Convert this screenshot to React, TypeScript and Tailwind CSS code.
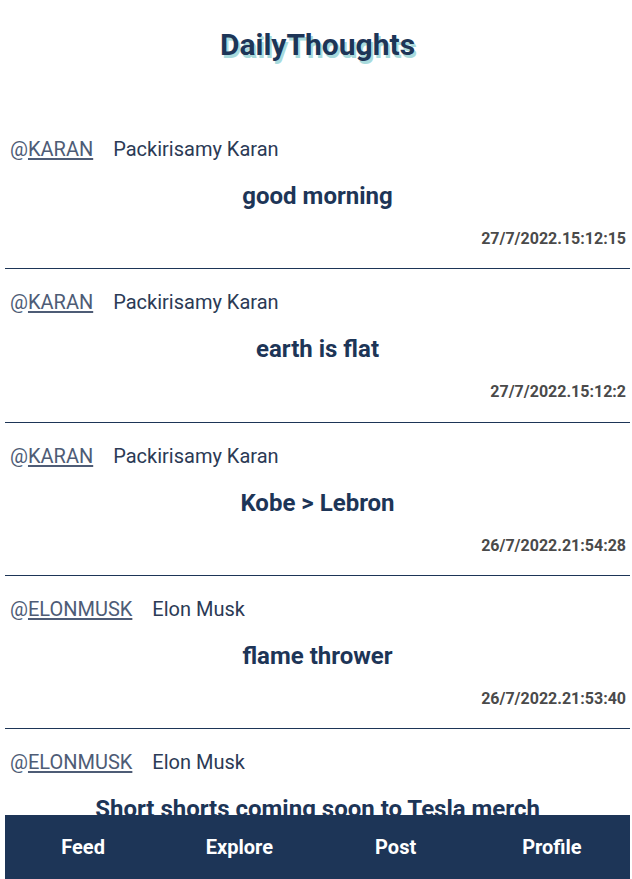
import React from "react";

type Thought = {
  handle: string;
  name: string;
  text: string;
  time: string;
};

const thoughts: Thought[] = [
  { handle: "KARAN", name: "Packirisamy Karan", text: "good morning", time: "27/7/2022.15:12:15" },
  { handle: "KARAN", name: "Packirisamy Karan", text: "earth is flat", time: "27/7/2022.15:12:2" },
  { handle: "KARAN", name: "Packirisamy Karan", text: "Kobe > Lebron", time: "26/7/2022.21:54:28" },
  { handle: "ELONMUSK", name: "Elon Musk", text: "flame thrower", time: "26/7/2022.21:53:40" },
  { handle: "ELONMUSK", name: "Elon Musk", text: "Short shorts coming soon to Tesla merch", time: "26/7/2022.21:50:11" },
];

const Post = ({ t }: { t: Thought }) => {
  return (
    <div className="border-b border-[#1d3557] pt-[19px] pb-[17.3px]">
      <div className="flex items-center px-[5px] text-xl leading-7">
        <span className="text-[#4e5c76]">
          @<a href="#" className="underline underline-offset-2">{t.handle}</a>
        </span>
        <span className="ml-5 text-[#2b3a55]">{t.name}</span>
      </div>
      <p className="mt-[17px] text-center text-2xl leading-8 font-bold text-[#1d3557]">{t.text}</p>
      <p className="mt-[15px] pr-[4px] text-right text-base leading-6 font-bold text-[#4a4a4a]">{t.time}</p>
    </div>
  );
};

const App = () => {
  return (
    <div className="min-h-screen bg-white font-['Roboto',sans-serif]">
      <div className="ml-[5px] w-[625px] pb-16">
        <h1 className="pt-[27px] text-center text-3xl leading-9 font-bold text-[#1d3557] [text-shadow:2px_3px_0_#a8dadc]">
          DailyThoughts
        </h1>
        <div className="mt-[53px]">
          {thoughts.map((t, i) => (
            <Post key={i} t={t} />
          ))}
        </div>
      </div>

      {/* bottom nav */}
      <nav className="fixed bottom-0 left-[5px] grid h-16 w-[625px] grid-cols-4 items-center bg-[#1d3557] text-center text-xl font-bold text-white">
        <a href="#">Feed</a>
        <a href="#">Explore</a>
        <a href="#">Post</a>
        <a href="#">Profile</a>
      </nav>
    </div>
  );
};

export default App;
